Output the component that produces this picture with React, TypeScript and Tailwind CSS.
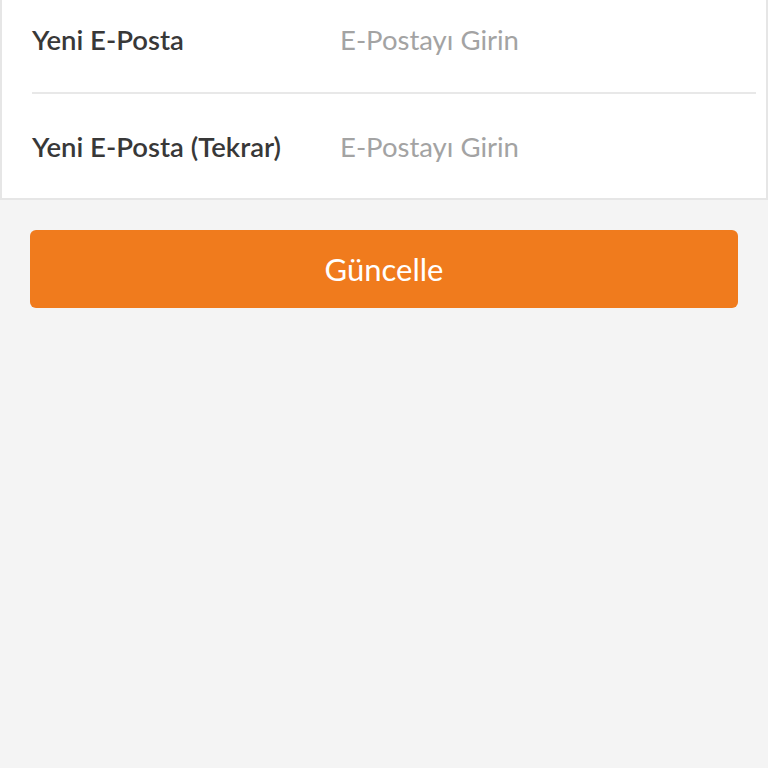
export default function App() {
  const rows = [
    { label: "Yeni E-Posta", placeholder: "E-Postayı Girin" },
    { label: "Yeni E-Posta (Tekrar)", placeholder: "E-Postayı Girin" },
  ];

  return (
    <main
      className="min-h-[768px] w-full bg-[#f4f4f4] overflow-hidden"
      style={{ fontFamily: "Lato, 'Open Sans', sans-serif" }}
    >
      {/* Form card */}
      <div className="-mt-[12px] bg-white border-x-2 border-b-2 border-[#e6e6e6]">
        {rows.map((row, i) => (
          <div key={row.label} className="pl-[30px] pr-[10px]">
            <div
              className={
                "flex flex-row items-center " +
                (i === 0 ? "h-[106px] border-b-2 border-[#e8e8e8]" : "h-[104px] pt-[2px]")
              }
            >
              <p className="w-[308px] shrink-0 text-[27.5px] font-semibold text-[#383838]">
                {row.label}
              </p>
              <input
                type="email"
                placeholder={row.placeholder}
                className="flex-1 bg-transparent text-[27.5px] text-[#333333] placeholder:text-[#a3a3a3] outline-none"
              />
            </div>
          </div>
        ))}
      </div>

      {/* Submit */}
      <div className="px-[30px] pt-[30px]">
        <button className="w-full h-[78px] rounded-[6px] bg-[#f07b1d] text-white text-[31px] font-normal">
          Güncelle
        </button>
      </div>
    </main>
  );
}
